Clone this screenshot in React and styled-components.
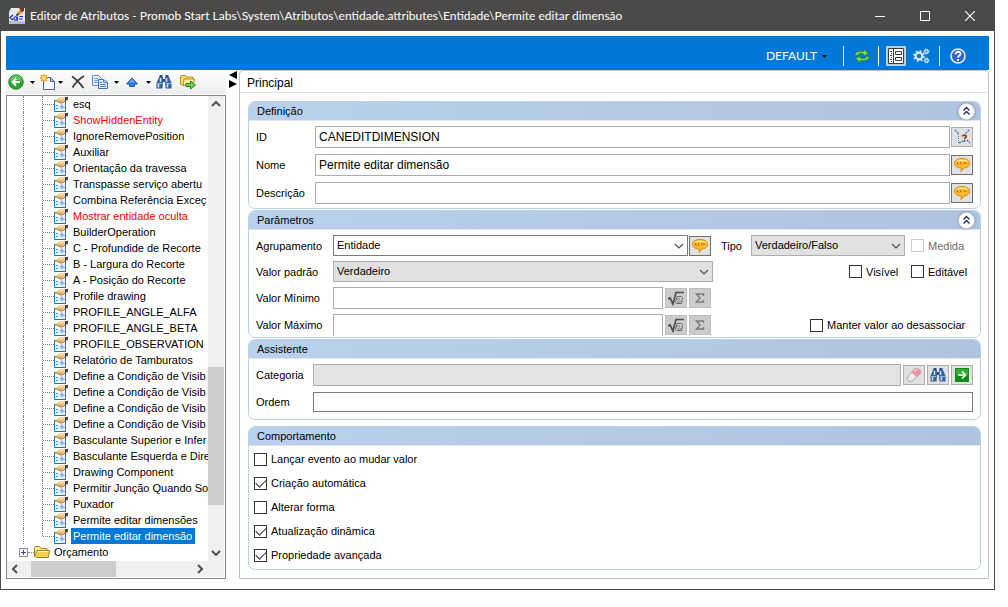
import React, { useState } from "react";
import styled, { createGlobalStyle, css } from "styled-components";

const GlobalStyle = createGlobalStyle`
    * { box-sizing: border-box; }
    body {
        margin: 0;
        background: #ffffff;
        color: #000000;
        font: 11px/16px "Liberation Sans", Arial, sans-serif;
    }
    button, input, select {
        margin: 0;
        padding: 0;
        border-radius: 0;
        color: inherit;
        font: inherit;
    }
    svg { display: block; flex: none; }
`;

const Window = styled.div`
    display: flex;
    flex-direction: column;
    min-height: calc(100vh - 17px);
    margin: 0 13px 17px 0;
    border: 1px solid #4d4b49;
    border-top: 0;
`;

const TitleBar = styled.header`
    display: flex;
    align-items: center;
    height: 31px;
    padding: 0 2px 0 8px;
    background: #4c4a48;
    color: #ffffff;
`;

const Title = styled.h1`
    flex: 1;
    min-width: 0;
    margin: 0 0 0 5px;
    overflow: hidden;
    white-space: nowrap;
    font: 400 12px/16px Lato, "Open Sans", sans-serif;
`;

const WindowButton = styled.button`
    display: flex;
    align-items: center;
    justify-content: center;
    width: 45px;
    height: 30px;
    border: 0;
    background: transparent;
`;

const Client = styled.div`
    display: flex;
    flex: 1;
    flex-direction: column;
    padding: 5px 5px 10px;
`;

const Ribbon = styled.div`
    display: flex;
    align-items: center;
    justify-content: flex-end;
    height: 34px;
    padding: 6px 21px 0 0;
    background: #0078d7;
    color: #ffffff;
`;

const RibbonButton = styled.button`
    display: flex;
    align-items: center;
    justify-content: center;
    min-width: 20px;
    height: 20px;
    margin-right: ${props => props.$gap || 0}px;
    border: 0;
    background: ${props => (props.$active ? "#c2cbd6" : "transparent")};
`;

const ProfileButton = styled(RibbonButton)`
    gap: 5px;
    font: 12px/16px Lato, "Open Sans", sans-serif;
`;

const Divider = styled.span`
    width: 1px;
    height: 20px;
    margin: 0 ${props => props.$right}px 0 ${props => props.$left}px;
    background: #ffffff;
`;

const Workspace = styled.div`
    display: flex;
    flex: 1;
`;

const Sidebar = styled.aside`
    display: flex;
    flex-direction: column;
    width: 220px;
`;

const Toolbar = styled.div`
    display: flex;
    align-items: center;
    height: 24px;
    margin-bottom: 1px;
    padding-left: 2px;
    border-radius: 0 0 4px 0;
    background: linear-gradient(#fdfdfd, #eeeeee);
`;

const ToolButton = styled.button`
    display: flex;
    align-items: center;
    justify-content: center;
    width: ${props => (props.$narrow ? 8 : 16)}px;
    height: 20px;
    margin-left: ${props => props.$gap || 0}px;
    border: 0;
    background: transparent;
`;

const TreeBox = styled.div`
    display: grid;
    flex: 1;
    grid-template-columns: minmax(0, 1fr) 16px;
    grid-template-rows: 1fr 16px;
    padding: 0 1px 1px 0;
    border: 1px solid #828790;
`;

const TreeList = styled.ul`
    margin: 0;
    padding: 0;
    overflow: hidden;
    list-style: none;
`;

const TreeItem = styled.li`
    display: flex;
    align-items: center;
    height: 16px;
    white-space: nowrap;
`;

const Guide = styled.span`
    flex: none;
    align-self: flex-start;
    width: ${props => props.$width}px;
    height: ${props => (props.$end ? 8 : 16)}px;
    border-right: 1px dotted #808080;
`;

const Branch = styled.span`
    flex: none;
    width: ${props => props.$width}px;
    border-top: 1px dotted #808080;
`;

const Expander = styled.button`
    display: flex;
    flex: none;
    align-items: center;
    justify-content: center;
    width: 9px;
    height: 9px;
    margin-left: 12px;
    border: 1px solid #919191;
    background: #ffffff;
`;

const NodeLabel = styled.span`
    height: 16px;
    margin-left: 2px;
    padding: 0 3px 0 2px;
    color: ${props => (props.$selected ? "#ffffff" : props.$alert ? "#ff0000" : "#000000")};
    background: ${props => (props.$selected ? "#0078d7" : "transparent")};
`;

const ScrollBar = styled.div`
    display: flex;
    flex-direction: ${props => (props.$vertical ? "column" : "row")};
    background: #f0f0f0;
`;

const ScrollButton = styled.button`
    display: flex;
    align-items: center;
    justify-content: center;
    width: 16px;
    height: 16px;
    border: 0;
    background: transparent;
`;

const Track = styled.div`
    display: flex;
    flex: 1;
    flex-direction: inherit;
`;

const Space = styled.span`
    flex: ${props => props.$grow};
`;

const Thumb = styled.div`
    flex: ${props => props.$grow};
    background: #cdcdcd;
`;

const Corner = styled.div`
    background: #f0f0f0;
`;

const Splitter = styled.div`
    display: flex;
    flex-direction: column;
    align-items: center;
    width: 13px;
    padding-top: 1px;
`;

const Main = styled.main`
    flex: 1;
    min-width: 0;
    border: 1px solid #c3c3c3;
    border-radius: 4px 4px 0 0;
`;

const TabTitle = styled.h2`
    height: 22px;
    margin: 0;
    padding: 4px 7px 0;
    border-bottom: 1px solid #dfdfdf;
    font-size: 12px;
    font-weight: 400;
`;

const Form = styled.form`
    display: flex;
    flex-direction: column;
    gap: 1px;
    padding: 8px 7px 7px 8px;
`;

const Group = styled.section`
    margin-top: ${props => props.$gap || 0}px;
    overflow: hidden;
    border: 1px solid #b9d1ec;
    border-radius: 7px;
`;

const GroupHeader = styled.header`
    display: flex;
    align-items: center;
    justify-content: space-between;
    height: 18px;
    padding: 0 5px 0 8px;
    background: linear-gradient(90deg, #b9d1ec, #aec3df);
`;

const GroupTitle = styled.h3`
    margin: 0;
    font-size: 11px;
    font-weight: 400;
`;

const CollapseButton = styled.button`
    display: flex;
    align-items: center;
    justify-content: center;
    width: 17px;
    height: 17px;
    border: 1px solid #c9cfd9;
    border-radius: 50%;
    background: #ffffff;
    box-shadow: 0 0 2px #687a94;
`;

const GroupBody = styled.div`
    display: flex;
    flex-direction: column;
    gap: ${props => props.$gap}px;
    padding: 5px ${props => props.$side || 7}px ${props => props.$bottom}px;
    border-top: 1px solid #dfe9f6;
`;

const Row = styled.div`
    display: grid;
    grid-template-columns: ${props => props.$columns};
    align-items: center;
    min-height: ${props => props.$height || 22}px;
`;

const Cell = styled.div`
    display: flex;
    align-items: center;
    gap: ${props => props.$gap || 2}px;
    padding-right: ${props => props.$end || 0}px;
`;

const InfoCell = styled(Cell)`
    justify-content: flex-end;
    gap: 0;
    padding-left: 8px;
`;

const FieldLabel = styled.label`
    flex: none;
    width: ${props => (props.$width ? props.$width + "px" : "auto")};
    white-space: nowrap;
`;

const TextInput = styled.input`
    flex: 1;
    width: 100%;
    min-width: 0;
    height: ${props => (props.$dark ? 20 : 22)}px;
    padding: 0 3px;
    border: 1px solid ${props => (props.$dark ? "#7a7a7a" : "#abadb3")};
    background: #ffffff;
    font-size: 12px;
    ${props => props.$cut && css`border-bottom: 0;`}
    &:disabled {
        background: #e3e3e3;
    }
`;

const SelectBox = styled.div`
    position: relative;
    flex: 1;
    min-width: 0;
    svg {
        position: absolute;
        top: 8px;
        right: 4px;
        pointer-events: none;
    }
`;

const Select = styled.select`
    display: block;
    width: 100%;
    height: 21px;
    padding: 0 20px 1px 3px;
    appearance: none;
    border: 1px solid ${props => (props.$light ? "#7a7a7a" : "#adadad")};
    background: ${props => (props.$light ? "#ffffff" : "#e1e1e1")};
`;

const IconButton = styled.button`
    display: flex;
    flex: none;
    align-items: center;
    justify-content: center;
    width: 22px;
    height: 20px;
    border: 1px solid ${props => (props.$dark ? "#6f6f6f" : "#adadad")};
    background: #e1e1e1;
    &:disabled {
        border-color: #bfbfbf;
        background: #cccccc;
    }
`;

const CheckLabel = styled.label`
    display: flex;
    align-items: center;
    gap: 4px;
    width: ${props => (props.$width ? props.$width + "px" : "auto")};
    color: ${props => (props.$disabled ? "#6d6d6d" : "#000000")};
    white-space: nowrap;
`;

const CheckBox = styled.input`
    display: flex;
    flex: none;
    justify-content: center;
    width: 13px;
    height: 13px;
    appearance: none;
    border: 1px solid #333333;
    background: #ffffff;
    &:checked::after {
        content: "";
        width: 9px;
        height: 5px;
        margin-top: 1px;
        border: solid #333333;
        border-width: 0 0 1px 1px;
        transform: rotate(-45deg);
    }
    &:disabled {
        border-color: #cccccc;
    }
`;

const Caret = ({ color = "#000000" }) => (
    <svg width="5" height="3" viewBox="0 0 5 3"><path d="M0 0h5L2.500 3z" fill={color} /></svg>
);

const Chevron = ({ turn = 0, bold }) => (
    <svg width="10" height="6" viewBox="0 0 10 6">
        <path d="M1 1l4 4 4-4" transform={`rotate(${turn} 5 3)`} fill="none" stroke="#505050" strokeWidth={bold ? 2 : 1.2} />
    </svg>
);

const AppIcon = () => (
    <svg width="16" height="16" viewBox="0 0 16 16">
        <path d="M2 0h14v16H0V4z" fill="#e6e7eb" />
        <path d="M0 13h16v3H0z" fill="#b7bcc8" />
        <path d="M8 5l4-4 2 3-4 3z" fill="#d98a1c" />
        <path d="M10 0h5v3l-2 1z" fill="#7b2f12" />
        <path d="M8 5l2 2-3 1z" fill="#1c1c1c" />
        <path d="M4 7L1 9.500l3 2.500M10.500 8.500H14M10 11h3.500" fill="none" stroke="#1321c4" strokeWidth="1.200" />
        <ellipse cx="6.500" cy="10.500" rx="1.600" ry="1.700" fill="none" stroke="#1321c4" strokeWidth="1.100" />
        <path d="M8.500 8.500v4" stroke="#1321c4" />
    </svg>
);

const BackIcon = () => (
    <svg width="16" height="16" viewBox="0 0 16 16">
        <circle cx="8" cy="8" r="7.200" fill="#2fa432" stroke="#16801d" />
        <path d="M2 7a6 6 0 0 1 12 0c-3-1.500-8-1.500-12 0z" fill="#62c45c" />
        <path d="M12 8H5M8 4.500L4.500 8 8 11.500" fill="none" stroke="#ffffff" strokeWidth="2" />
    </svg>
);

const NewIcon = () => (
    <svg width="16" height="16" viewBox="0 0 16 16">
        <path d="M3.500 3.500h7L14.500 7.500v8h-11z" fill="#f5f9ff" stroke="#49678f" />
        <path d="M10.500 3.500v4h4z" fill="#b8cff0" stroke="#49678f" />
        <path d="M4 0v8M0 4h8M1 1l6 6M7 1L1 7" stroke="#e89a18" strokeWidth="1.500" />
        <circle cx="4" cy="4" r="2" fill="#ffe36c" />
    </svg>
);

const DeleteIcon = () => (
    <svg width="16" height="16" viewBox="0 0 16 16">
        <path d="M2 2.500C6 5 10 9.500 13.500 14M14 2C9 5 5 9.500 2.500 13.500" fill="none" stroke="#3a3a3a" strokeWidth="1.800" />
    </svg>
);

const CopyIcon = () => (
    <svg width="16" height="16" viewBox="0 0 16 16">
        <path d="M.5 1.500h6l3 3v7h-9z" fill="#e8f1ff" stroke="#5d8ed4" />
        <path d="M2 4.500h4M2 6.500h4M2 8.500h4" stroke="#79a6e4" />
        <path d="M6.500 5.500h5l4 3v6h-9z" fill="#e8f1ff" stroke="#3e70bd" />
        <path d="M11.500 5.500v3h4M8 8.500h2M8 10.500h6M8 12.500h6" fill="none" stroke="#4f83cf" />
    </svg>
);

const UpIcon = () => (
    <svg width="14" height="14" viewBox="0 0 14 14">
        <path d="M7 3l5.500 6H9.500v2.500h-5V9h-3z" fill="#2f7be8" stroke="#1c5dbd" />
        <path d="M7 4L4 7.500h6z" fill="#72acf7" />
    </svg>
);

const BinocularsIcon = () => (
    <svg width="16" height="16" viewBox="0 0 16 16">
        <path d="M3 3h4v5l-.5 6.500H.5V9zM9 3h4l2.500 6v5.500h-6L9 8z" fill="#35619f" />
        <path d="M3.500 1h3v2h-3zM9.500 1h3v2h-3z" fill="#234d88" />
        <path d="M7 5h2v3H7z" fill="#2b5290" />
        <path d="M4.500 4v4M10.500 4v4M2.500 10v3.500M11.500 10v3.500" stroke="#d3e5fb" strokeWidth="1.500" />
        <path d="M1 9.500h5M10 9.500h5" stroke="#8fb4e6" />
    </svg>
);

const ExportIcon = () => (
    <svg width="16" height="16" viewBox="0 0 16 16">
        <path d="M.5 10V3l1-1.500h4L7 3h5.500v8h-11z" fill="#f8de72" stroke="#b98a1c" />
        <path d="M3 11.500L4 5h10.500L13 11.500z" fill="#fff0a5" stroke="#b98a1c" />
        <path d="M6 9.500h4.500V7l5 4-5 4v-2.500H6z" fill="#6fd052" stroke="#258526" />
    </svg>
);

const AttributeIcon = () => (
    <svg width="15" height="15" viewBox="0 0 15 15">
        <path d="M.5 3.500h11v11H.5z" fill="#eaf4ff" stroke="#1c6fce" />
        <path d="M2 8.500h2M2 11.500h2M5.500 10h5M8 7.500v5" stroke="#4d9be6" />
        <path d="M1.500 3.500L5 .500h6.500v3L9 5.500 6 6 3 4.500z" fill="#f0c47a" />
        <path d="M1.500 3.800L4 4M4 5.500l3-1M6 6.200l3.500-1L11.500 4" fill="none" stroke="#9c6524" strokeWidth=".9" />
        <path d="M5 2.500l4-1" stroke="#ffe3ad" />
        <path d="M11 0h3v3l-3 1z" fill="#3b4774" />
    </svg>
);

const FolderIcon = () => (
    <svg width="16" height="14" viewBox="0 0 16 14">
        <path d="M.5 12V2.500l1-1h4l1.500 2h6v2" fill="#fbe695" stroke="#a98220" />
        <path d="M2.500 12.500l-2-1L3 5.500h12.500l-1 7z" fill="#f3cf55" stroke="#a98220" />
        <path d="M3.500 6.500h11" stroke="#fff4bd" />
    </svg>
);

const RefreshIcon = () => (
    <svg width="18" height="16" viewBox="0 0 18 16">
        <path d="M1.500 7.500C2 4 6 2.500 10.500 3.500V1l5 4.500-5 2.500V6C7 5 5 6 4.500 7.500z" fill="#7bd55b" stroke="#268d32" />
        <path d="M16.500 8.500c-.5 3.500-4.500 5-9 4V15l-5-4.500 5-2.500v2c3.500 1 5.500 0 6-1.500z" fill="#7bd55b" stroke="#268d32" />
    </svg>
);

const PanelIcon = () => (
    <svg width="16" height="16" viewBox="0 0 16 16">
        <path d="M.5.500h15v15H.5zM5.500.500v15" fill="#ffffff" stroke="#3c3c3c" />
        <path d="M7.500 3.500h6v3h-6zM7.500 9.500h6v3h-6z" fill="#ffffff" stroke="#3c3c3c" />
        <path d="M2 3.500h2M3 5.500h1M2 7.500h2M3 9.500h1M2 11.500h2M3 13.500h1" stroke="#3c3c3c" />
    </svg>
);

const GearsIcon = () => (
    <svg width="17" height="16" viewBox="0 0 17 16">
        <g fill="none" stroke="#dce9f6">
            <circle cx="6" cy="8" r="3.300" strokeWidth="2.200" />
            <circle cx="6" cy="8" r="5" strokeWidth="1.600" strokeDasharray="2 1.927" />
            <circle cx="13.500" cy="3.500" r="1.600" strokeWidth="1.200" />
            <circle cx="13.500" cy="3.500" r="2.500" strokeDasharray="1.200 .763" />
            <circle cx="13.500" cy="12.500" r="1.600" strokeWidth="1.200" />
            <circle cx="13.500" cy="12.500" r="2.500" strokeDasharray="1.200 .763" />
        </g>
    </svg>
);

const HelpIcon = () => (
    <svg width="16" height="16" viewBox="0 0 16 16">
        <circle cx="8" cy="8" r="7" fill="#3566cc" stroke="#e6edfa" strokeWidth="1.600" />
        <path d="M5.500 6.300c0-3.500 5.500-3.200 5-.2C10.300 7.500 8 7.700 8 9.600M8 11v2" fill="none" stroke="#ffffff" strokeWidth="1.800" />
    </svg>
);

const DoubleUpIcon = () => (
    <svg width="9" height="10" viewBox="0 0 9 10">
        <path d="M1.500 4.500l3-3 3 3M1.500 8.500l3-3 3 3" fill="none" stroke="#1c2c5e" strokeWidth="1.400" />
    </svg>
);

const PickIcon = () => (
    <svg width="18" height="18" viewBox="0 0 18 18">
        <path d="M2 2l4 4M16 2l-4 4M14 12l3 3M6 15l4-2" fill="none" stroke="#2468e0" strokeWidth="1.300" strokeDasharray="2 1" />
        <path d="M5.500 6v9" stroke="#29a0b8" strokeDasharray="1 1" />
        <path d="M9.500 8.500c0-2 4-1.800 3.700.2-.2 1.300-1.700 1.200-1.700 2.500M11.500 12.300v1.700" fill="none" stroke="#83421c" strokeWidth="1.700" />
    </svg>
);

const BubbleIcon = () => (
    <svg width="18" height="16" viewBox="0 0 18 16">
        <path d="M9 1.500c4 0 7.500 1.700 7.500 4.800 0 3-2.500 4.500-5.500 4.700L8 14.500l.5-3.500c-4 0-7-1.700-7-4.700C1.500 3.200 5 1.500 9 1.500z" fill="#fcba2d" stroke="#d48a12" />
        <path d="M3 5c1-3 10-3.500 12 0-3-1.500-9-1.500-12 0z" fill="#fff1a0" />
        <path d="M4.500 5v2h1.500M7.500 5v2h1M11 5v2M13 5v2" fill="none" stroke="#c95a14" />
    </svg>
);

const FormulaIcon = () => (
    <svg width="16" height="16" viewBox="0 0 16 16">
        <path d="M0 9l2-1 3 6L8 2.500h8" fill="none" stroke="#4e4e4e" strokeWidth="1.700" />
        <path d="M9 6.500h4.500l1 1-1 6h-5l-1-1z" fill="#d6d6d6" stroke="#666666" />
        <path d="M9 10c2-3 4-1 2 .5S9 13 13 11.500" fill="none" stroke="#777777" />
    </svg>
);

const SigmaIcon = () => (
    <svg width="10" height="10" viewBox="0 0 10 10">
        <path d="M8.500 3V1h-7L5 5 1.500 9h7V7" fill="none" stroke="#7b7b7b" strokeWidth="1.500" />
    </svg>
);

const EraserIcon = () => (
    <svg width="16" height="16" viewBox="0 0 16 16">
        <path d="M1.500 10L8 2.500c1.500-1.500 3-1.500 4.500-.5l1.500 1.500c1 1.500 1 2.500-.5 4L6 14c-3 1.500-6-1-4.500-4z" fill="#ececec" stroke="#a5a5a5" />
        <path d="M5.500 5.500L8.500 2C10 1 11.500 1 13 2l1.500 1.500c.8 1.500.5 2.500-.5 4L10.500 10z" fill="#ea93a4" />
        <path d="M8.500 4.500l2.500-2" stroke="#ffd5dc" strokeWidth="1.500" />
    </svg>
);

const GoIcon = () => (
    <svg width="14" height="14" viewBox="0 0 14 14">
        <path d="M0 0h14v14H0z" fill="#168a1c" />
        <path d="M1 1h12v6H1z" fill="#35ad32" />
        <path d="M3 7h7M7 3.500L10.500 7 7 10.500" fill="none" stroke="#ffffff" strokeWidth="1.600" />
    </svg>
);

const nodes = [
    { name: "esq" },
    { name: "ShowHiddenEntity", alert: true },
    { name: "IgnoreRemovePosition" },
    { name: "Auxiliar" },
    { name: "Orientação da travessa" },
    { name: "Transpasse serviço abertu" },
    { name: "Combina Referência Exceç" },
    { name: "Mostrar entidade oculta", alert: true },
    { name: "BuilderOperation" },
    { name: "C - Profundide de Recorte" },
    { name: "B - Largura do Recorte" },
    { name: "A - Posição do Recorte" },
    { name: "Profile drawing" },
    { name: "PROFILE_ANGLE_ALFA" },
    { name: "PROFILE_ANGLE_BETA" },
    { name: "PROFILE_OBSERVATION" },
    { name: "Relatório de Tamburatos" },
    { name: "Define a Condição de Visib" },
    { name: "Define a Condição de Visib" },
    { name: "Define a Condição de Visib" },
    { name: "Define a Condição de Visib" },
    { name: "Basculante Superior e Infer" },
    { name: "Basculante Esquerda e Dire" },
    { name: "Drawing Component" },
    { name: "Permitir Junção Quando So" },
    { name: "Puxador" },
    { name: "Permite editar dimensões" },
    { name: "Permite editar dimensão" },
];

const behaviours = [
    { label: "Lançar evento ao mudar valor", checked: false },
    { label: "Criação automática", checked: true },
    { label: "Alterar forma", checked: false },
    { label: "Atualização dinâmica", checked: true },
    { label: "Propriedade avançada", checked: true },
];

const Check = ({ label, checked = false, disabled, width }) => (
    <CheckLabel $width={width} $disabled={disabled}>
        <CheckBox type="checkbox" defaultChecked={checked} disabled={disabled} />
        {label}
    </CheckLabel>
);

const Combo = ({ id, value, light }) => (
    <SelectBox>
        <Select id={id} $light={light} defaultValue={value}>
            <option>{value}</option>
        </Select>
        <Chevron />
    </SelectBox>
);

const Panel = ({ title, collapsible, gap, rowGap, bottom, side, children }) => {
    const [open, setOpen] = useState(true);

    return (
        <Group $gap={gap}>
            <GroupHeader>
                <GroupTitle>{title}</GroupTitle>
                {collapsible && (
                    <CollapseButton type="button" aria-label={title} onClick={() => setOpen(!open)}>
                        <DoubleUpIcon />
                    </CollapseButton>
                )}
            </GroupHeader>
            {open && <GroupBody $gap={rowGap} $bottom={bottom} $side={side}>{children}</GroupBody>}
        </Group>
    );
};

const Tree = () => {
    const [selected, setSelected] = useState(nodes.length - 1);

    return (
        <TreeBox>
            <TreeList>
                {nodes.map((node, index) => (
                    <TreeItem key={index} onClick={() => setSelected(index)}>
                        <Guide $width={17} />
                        <Guide $width={19} $end={index === nodes.length - 1} />
                        <Branch $width={11} />
                        <AttributeIcon />
                        <NodeLabel $alert={node.alert} $selected={index === selected}>{node.name}</NodeLabel>
                    </TreeItem>
                ))}
                <TreeItem>
                    <Expander aria-label="Expandir">
                        <svg width="5" height="5" viewBox="0 0 5 5"><path d="M0 2.500h5M2.500 0v5" stroke="#33508a" /></svg>
                    </Expander>
                    <Branch $width={6} />
                    <FolderIcon />
                    <NodeLabel>Orçamento</NodeLabel>
                </TreeItem>
            </TreeList>
            <ScrollBar $vertical>
                <ScrollButton aria-label="Acima"><Chevron turn={180} bold /></ScrollButton>
                <Track>
                    <Space $grow={254} />
                    <Thumb $grow={138} />
                    <Space $grow={40} />
                </Track>
                <ScrollButton aria-label="Abaixo"><Chevron bold /></ScrollButton>
            </ScrollBar>
            <ScrollBar>
                <ScrollButton aria-label="Esquerda">
                    <svg width="6" height="10" viewBox="0 0 6 10"><path d="M5 1L1 5l4 4" fill="none" stroke="#505050" strokeWidth="2" /></svg>
                </ScrollButton>
                <Track>
                    <Space $grow={8} />
                    <Thumb $grow={85} />
                    <Space $grow={76} />
                </Track>
                <ScrollButton aria-label="Direita">
                    <svg width="6" height="10" viewBox="0 0 6 10"><path d="M1 1l4 4-4 4" fill="none" stroke="#505050" strokeWidth="2" /></svg>
                </ScrollButton>
            </ScrollBar>
            <Corner />
        </TreeBox>
    );
};

const App = () => {
    return (
        <Window>
            <GlobalStyle />
            <TitleBar>
                <AppIcon />
                <Title>Editor de Atributos - Promob Start Labs\System\Atributos\entidade.attributes\Entidade\Permite editar dimensão</Title>
                <WindowButton aria-label="Minimizar">
                    <svg width="10" height="10" viewBox="0 0 10 10"><path d="M0 5.500h10" stroke="#ffffff" /></svg>
                </WindowButton>
                <WindowButton aria-label="Maximizar">
                    <svg width="10" height="10" viewBox="0 0 10 10"><path d="M.5.500h9v9h-9z" fill="none" stroke="#ffffff" /></svg>
                </WindowButton>
                <WindowButton aria-label="Fechar">
                    <svg width="10" height="10" viewBox="0 0 10 10"><path d="M0 0l10 10M10 0L0 10" stroke="#ffffff" strokeWidth="1.200" /></svg>
                </WindowButton>
            </TitleBar>
            <Client>
                <Ribbon>
                    <ProfileButton>DEFAULT <Caret /></ProfileButton>
                    <Divider $left={16} $right={8} />
                    <RibbonButton aria-label="Atualizar"><RefreshIcon /></RibbonButton>
                    <Divider $left={6} $right={7} />
                    <RibbonButton $active $gap={5} aria-label="Painel"><PanelIcon /></RibbonButton>
                    <RibbonButton aria-label="Configurações"><GearsIcon /></RibbonButton>
                    <Divider $left={8} $right={8} />
                    <RibbonButton aria-label="Ajuda"><HelpIcon /></RibbonButton>
                </Ribbon>
                <Workspace>
                    <Sidebar>
                        <Toolbar>
                            <ToolButton aria-label="Voltar"><BackIcon /></ToolButton>
                            <ToolButton aria-label="Histórico"><Caret /></ToolButton>
                            <ToolButton aria-label="Novo"><NewIcon /></ToolButton>
                            <ToolButton $narrow aria-label="Opções de novo"><Caret /></ToolButton>
                            <ToolButton $gap={6} aria-label="Excluir"><DeleteIcon /></ToolButton>
                            <ToolButton $gap={6} aria-label="Copiar"><CopyIcon /></ToolButton>
                            <ToolButton aria-label="Opções de copiar"><Caret /></ToolButton>
                            <ToolButton aria-label="Subir"><UpIcon /></ToolButton>
                            <ToolButton aria-label="Opções de subir"><Caret /></ToolButton>
                            <ToolButton aria-label="Localizar"><BinocularsIcon /></ToolButton>
                            <ToolButton $gap={8} aria-label="Exportar"><ExportIcon /></ToolButton>
                        </Toolbar>
                        <Tree />
                    </Sidebar>
                    <Splitter>
                        <svg width="8" height="18" viewBox="0 0 8 18"><path d="M8 0v8L0 4zM0 9l8 4-8 4z" /></svg>
                    </Splitter>
                    <Main>
                        <TabTitle>Principal</TabTitle>
                        <Form onSubmit={(e) => e.preventDefault()}>
                            <Panel title="Definição" collapsible rowGap={6} bottom={4}>
                                <Row $columns="59px minmax(0, 1fr)">
                                    <FieldLabel htmlFor="id">ID</FieldLabel>
                                    <Cell $gap={1}>
                                        <TextInput id="id" defaultValue="CANEDITDIMENSION" />
                                        <IconButton type="button" aria-label="Escolher"><PickIcon /></IconButton>
                                    </Cell>
                                </Row>
                                <Row $columns="59px minmax(0, 1fr)">
                                    <FieldLabel htmlFor="nome">Nome</FieldLabel>
                                    <Cell $gap={1}>
                                        <TextInput id="nome" defaultValue="Permite editar dimensão" />
                                        <IconButton type="button" $dark aria-label="Traduzir nome"><BubbleIcon /></IconButton>
                                    </Cell>
                                </Row>
                                <Row $columns="59px minmax(0, 1fr)">
                                    <FieldLabel htmlFor="descricao">Descrição</FieldLabel>
                                    <Cell $gap={1}>
                                        <TextInput id="descricao" />
                                        <IconButton type="button" $dark aria-label="Traduzir descrição"><BubbleIcon /></IconButton>
                                    </Cell>
                                </Row>
                            </Panel>
                            <Panel title="Parâmetros" collapsible rowGap={5} bottom={1}>
                                <Row $columns="77px minmax(0, 1fr) 260px" $height={21}>
                                    <FieldLabel htmlFor="agrupamento">Agrupamento</FieldLabel>
                                    <Cell $gap={1} $end={2}>
                                        <Combo id="agrupamento" value="Entidade" light />
                                        <IconButton type="button" $dark aria-label="Traduzir agrupamento"><BubbleIcon /></IconButton>
                                    </Cell>
                                    <InfoCell>
                                        <FieldLabel htmlFor="tipo" $width={30}>Tipo</FieldLabel>
                                        <Combo id="tipo" value="Verdadeiro/Falso" />
                                        <Space $grow="0 0 6px" />
                                        <Check label="Medida" width={62} disabled />
                                    </InfoCell>
                                </Row>
                                <Row $columns="77px minmax(0, 1fr) 260px" $height={21}>
                                    <FieldLabel htmlFor="padrao">Valor padrão</FieldLabel>
                                    <Combo id="padrao" value="Verdadeiro" />
                                    <InfoCell>
                                        <Check label="Visível" width={62} />
                                        <Check label="Editável" width={62} />
                                    </InfoCell>
                                </Row>
                                <Row $columns="77px minmax(0, 1fr) 260px">
                                    <FieldLabel htmlFor="minimo">Valor Mínimo</FieldLabel>
                                    <Cell $end={2}>
                                        <TextInput id="minimo" />
                                        <IconButton type="button" disabled aria-label="Fórmula do mínimo"><FormulaIcon /></IconButton>
                                        <IconButton type="button" disabled aria-label="Soma do mínimo"><SigmaIcon /></IconButton>
                                    </Cell>
                                </Row>
                                <Row $columns="77px minmax(0, 1fr) 260px">
                                    <FieldLabel htmlFor="maximo">Valor Máximo</FieldLabel>
                                    <Cell $end={2}>
                                        <TextInput id="maximo" $cut />
                                        <IconButton type="button" disabled aria-label="Fórmula do máximo"><FormulaIcon /></IconButton>
                                        <IconButton type="button" disabled aria-label="Soma do máximo"><SigmaIcon /></IconButton>
                                    </Cell>
                                    <InfoCell>
                                        <Check label="Manter valor ao desassociar" width={163} />
                                    </InfoCell>
                                </Row>
                            </Panel>
                            <Panel title="Assistente" rowGap={6} bottom={7}>
                                <Row $columns="57px minmax(0, 1fr)">
                                    <FieldLabel htmlFor="categoria">Categoria</FieldLabel>
                                    <Cell>
                                        <TextInput id="categoria" disabled />
                                        <IconButton type="button" aria-label="Limpar"><EraserIcon /></IconButton>
                                        <IconButton type="button" aria-label="Procurar"><BinocularsIcon /></IconButton>
                                        <IconButton type="button" aria-label="Ir"><GoIcon /></IconButton>
                                    </Cell>
                                </Row>
                                <Row $columns="57px minmax(0, 1fr)" $height={20}>
                                    <FieldLabel htmlFor="ordem">Ordem</FieldLabel>
                                    <TextInput id="ordem" $dark />
                                </Row>
                            </Panel>
                            <Panel title="Comportamento" gap={5} rowGap={8} bottom={6} side={5}>
                                {behaviours.map((item) => (
                                    <Check key={item.label} label={item.label} checked={item.checked} />
                                ))}
                            </Panel>
                        </Form>
                    </Main>
                </Workspace>
            </Client>
        </Window>
    );
};

export default App;
